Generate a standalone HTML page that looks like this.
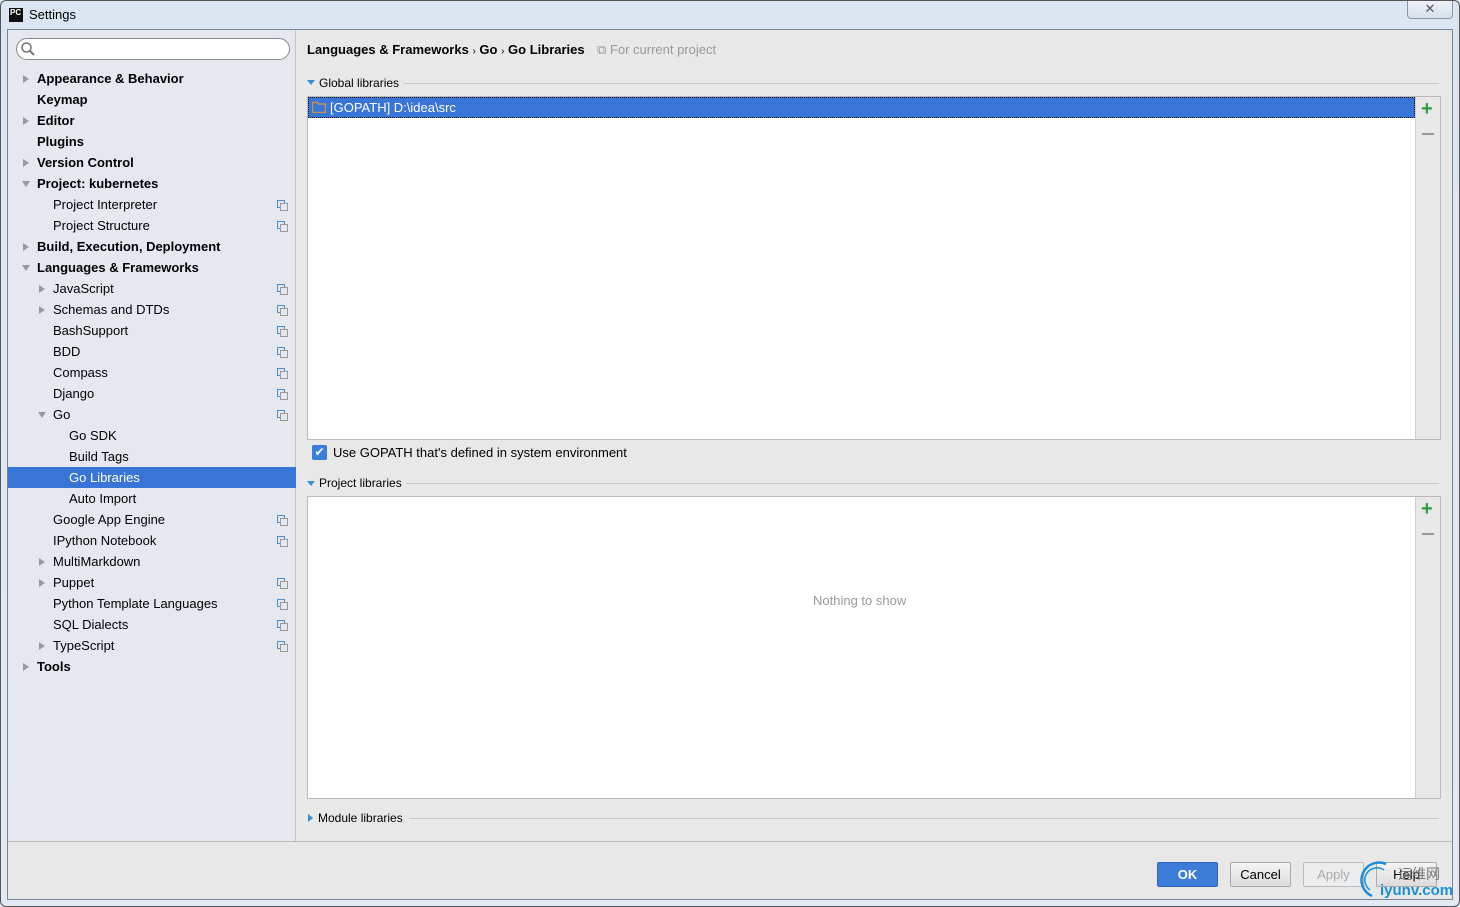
<!DOCTYPE html>
<html><head><meta charset="utf-8"><style>
*{margin:0;padding:0;box-sizing:border-box}
body{width:1460px;height:907px;overflow:hidden;background:#dfe7f0;font-family:"Liberation Sans","DejaVu Sans",sans-serif;font-size:13px;color:#000;position:relative}
.a{position:absolute}
.win{left:0;top:0;width:1460px;height:907px;border:1px solid #555;border-radius:6px;background:linear-gradient(#dce6f2,#e3eaf3)}
.dlg{left:7px;top:29px;width:1446px;height:871px;border:1px solid #7a8594;background:#e8e8e8}
.left{left:8px;top:30px;width:288px;height:811px;background:#e5e9ef;border-right:1px solid #c4c4c4}
.row{position:absolute;left:0;width:288px;height:21px;line-height:21px;white-space:nowrap}
.b{font-weight:bold}
.tri{position:absolute;top:7px;width:0;height:0;border-top:4px solid transparent;border-bottom:4px solid transparent;border-left:6px solid #999}
.trd{position:absolute;top:8px;width:0;height:0;border-left:4px solid transparent;border-right:4px solid transparent;border-top:6px solid #999}
.ic{position:absolute;left:269px;top:6px;width:9px;height:9px}
.ic:before{content:"";position:absolute;left:0;top:0;width:6px;height:6px;border:1px solid #4a8fc9}
.ic:after{content:"";position:absolute;left:3px;top:3px;width:6px;height:6px;border:1px solid #999;background:#e5e9ef}
.sel{background:#3875d7;color:#fff}
.btn{position:absolute;top:862px;height:25px;border:1px solid #aaa;border-radius:2px;background:linear-gradient(#f4f4f4,#dcdcdc);text-align:center;line-height:23px;font-size:13px}
.hdr{font-size:12px}
.line{position:absolute;height:1px;background:#c8c8c8}
</style></head><body>
<div class="a win"></div>
<div class="a" style="left:9px;top:8px;width:14px;height:14px;background:#111;color:#fff;font-size:8px;font-weight:bold;line-height:10px;padding-left:1px">PC</div>
<div class="a" style="left:29px;top:7px;font-size:13px">Settings</div>
<div class="a" style="left:1407px;top:1px;width:46px;height:18px;border:1px solid #8a97a8;border-top:none;border-radius:0 0 4px 4px;background:linear-gradient(#eef2f7,#d6dfea);text-align:center;line-height:16px;color:#555;font-size:13px;font-weight:bold">✕</div>
<div class="a dlg"></div>
<div class="a left"></div>
<div class="a" style="left:16px;top:38px;width:274px;height:22px;border:1px solid #888;border-radius:11px;background:#fff"></div>
<svg class="a" style="left:20px;top:41px" width="16" height="16"><circle cx="6.5" cy="6.5" r="4.5" fill="none" stroke="#777" stroke-width="1.6"/><line x1="10" y1="10" x2="14" y2="14" stroke="#777" stroke-width="2"/></svg>

<div class="a" style="left:8px;top:68px">
<div class="row b" style="top:0"><i class="tri" style="left:15px"></i><span style="margin-left:29px">Appearance &amp; Behavior</span></div>
<div class="row b" style="top:21px"><span style="margin-left:29px">Keymap</span></div>
<div class="row b" style="top:42px"><i class="tri" style="left:15px"></i><span style="margin-left:29px">Editor</span></div>
<div class="row b" style="top:63px"><span style="margin-left:29px">Plugins</span></div>
<div class="row b" style="top:84px"><i class="tri" style="left:15px"></i><span style="margin-left:29px">Version Control</span></div>
<div class="row b" style="top:105px"><i class="trd" style="left:14px"></i><span style="margin-left:29px">Project: kubernetes</span></div>
<div class="row" style="top:126px"><span style="margin-left:45px">Project Interpreter</span><i class="ic"></i></div>
<div class="row" style="top:147px"><span style="margin-left:45px">Project Structure</span><i class="ic"></i></div>
<div class="row b" style="top:168px"><i class="tri" style="left:15px"></i><span style="margin-left:29px">Build, Execution, Deployment</span></div>
<div class="row b" style="top:189px"><i class="trd" style="left:14px"></i><span style="margin-left:29px">Languages &amp; Frameworks</span></div>
<div class="row" style="top:210px"><i class="tri" style="left:31px"></i><span style="margin-left:45px">JavaScript</span><i class="ic"></i></div>
<div class="row" style="top:231px"><i class="tri" style="left:31px"></i><span style="margin-left:45px">Schemas and DTDs</span><i class="ic"></i></div>
<div class="row" style="top:252px"><span style="margin-left:45px">BashSupport</span><i class="ic"></i></div>
<div class="row" style="top:273px"><span style="margin-left:45px">BDD</span><i class="ic"></i></div>
<div class="row" style="top:294px"><span style="margin-left:45px">Compass</span><i class="ic"></i></div>
<div class="row" style="top:315px"><span style="margin-left:45px">Django</span><i class="ic"></i></div>
<div class="row" style="top:336px"><i class="trd" style="left:30px"></i><span style="margin-left:45px">Go</span><i class="ic"></i></div>
<div class="row" style="top:357px"><span style="margin-left:61px">Go SDK</span></div>
<div class="row" style="top:378px"><span style="margin-left:61px">Build Tags</span></div>
<div class="row sel" style="top:399px"><span style="margin-left:61px">Go Libraries</span></div>
<div class="row" style="top:420px"><span style="margin-left:61px">Auto Import</span></div>
<div class="row" style="top:441px"><span style="margin-left:45px">Google App Engine</span><i class="ic"></i></div>
<div class="row" style="top:462px"><span style="margin-left:45px">IPython Notebook</span><i class="ic"></i></div>
<div class="row" style="top:483px"><i class="tri" style="left:31px"></i><span style="margin-left:45px">MultiMarkdown</span></div>
<div class="row" style="top:504px"><i class="tri" style="left:31px"></i><span style="margin-left:45px">Puppet</span><i class="ic"></i></div>
<div class="row" style="top:525px"><span style="margin-left:45px">Python Template Languages</span><i class="ic"></i></div>
<div class="row" style="top:546px"><span style="margin-left:45px">SQL Dialects</span><i class="ic"></i></div>
<div class="row" style="top:567px"><i class="tri" style="left:31px"></i><span style="margin-left:45px">TypeScript</span><i class="ic"></i></div>
<div class="row b" style="top:588px"><i class="tri" style="left:15px"></i><span style="margin-left:29px">Tools</span></div>
</div>

<div class="a b" style="left:307px;top:42px">Languages &amp; Frameworks <span style="font-weight:normal;font-size:10px">›</span> Go <span style="font-weight:normal;font-size:10px">›</span> Go Libraries</div>
<div class="a" style="left:597px;top:42px;color:#999">⧉ For current project</div>

<div class="a" style="left:307px;top:80px;width:0;height:0;border-left:4px solid transparent;border-right:4px solid transparent;border-top:5px solid #3a8fd0"></div>
<div class="a hdr" style="left:319px;top:76px">Global libraries</div>
<div class="line" style="left:403px;top:83px;width:1036px"></div>
<div class="a" style="left:307px;top:96px;width:1134px;height:344px;border:1px solid #bbb;background:#fff"></div>
<div class="a" style="left:1415px;top:97px;width:25px;height:342px;background:#e8e8e8;border-left:1px solid #ccc"></div>
<div class="a" style="left:308px;top:97px;width:1107px;height:21px;background:#3875d7;border:1px dotted #111"></div>
<svg class="a" style="left:312px;top:101px" width="14" height="12"><path d="M0.5 1.5h5l1 1.5h7v8.5h-13z" fill="none" stroke="#c8954a" stroke-width="1.5"/></svg>
<div class="a" style="left:330px;top:100px;color:#fff">[GOPATH] D:\idea\src</div>
<div class="a" style="left:1421px;top:98px;color:#2a9d3e;font-size:20px;font-weight:bold">+</div>
<div class="a" style="left:1422px;top:133px;width:12px;height:2px;background:#999"></div>

<div class="a" style="left:312px;top:445px;width:15px;height:15px;background:#3b7dd8;border-radius:2px;color:#fff;font-size:12px;line-height:15px;text-align:center">✔</div>
<div class="a" style="left:333px;top:445px">Use GOPATH that's defined in system environment</div>

<div class="a" style="left:307px;top:481px;width:0;height:0;border-left:4px solid transparent;border-right:4px solid transparent;border-top:5px solid #3a8fd0"></div>
<div class="a hdr" style="left:319px;top:476px">Project libraries</div>
<div class="line" style="left:406px;top:483px;width:1033px"></div>
<div class="a" style="left:307px;top:496px;width:1134px;height:303px;border:1px solid #bbb;background:#fff"></div>
<div class="a" style="left:1415px;top:497px;width:25px;height:301px;background:#e8e8e8;border-left:1px solid #ccc"></div>
<div class="a" style="left:813px;top:593px;color:#999">Nothing to show</div>
<div class="a" style="left:1421px;top:498px;color:#2a9d3e;font-size:20px;font-weight:bold">+</div>
<div class="a" style="left:1422px;top:533px;width:12px;height:2px;background:#999"></div>

<div class="a" style="left:308px;top:814px;width:0;height:0;border-top:4px solid transparent;border-bottom:4px solid transparent;border-left:5px solid #3a8fd0"></div>
<div class="a hdr" style="left:318px;top:811px">Module libraries</div>
<div class="line" style="left:409px;top:818px;width:1030px"></div>

<div class="a" style="left:8px;top:841px;width:1444px;height:1px;background:#bbb"></div>
<div class="btn" style="left:1157px;width:61px;background:#3b7dd8;border-color:#3466b8;color:#fff;font-weight:bold">OK</div>
<div class="btn" style="left:1230px;width:61px">Cancel</div>
<div class="btn" style="left:1303px;width:61px;color:#aaa;background:#ececec;border-color:#bbb">Apply</div>
<div class="btn" style="left:1376px;width:61px">Help</div>
<div class="a" style="left:1398px;top:864px;color:#777;font-size:14px;font-family:'Noto Sans CJK SC',sans-serif">运维网</div>
<div class="a" style="left:1380px;top:882px;color:#1a8fd8;font-size:15px;font-weight:bold">iyunv.com</div>
<svg class="a" style="left:1356px;top:860px" width="40" height="40"><path d="M30 4 A17 17 0 1 0 16 36" fill="none" stroke="#1a8fd8" stroke-width="2.5"/><path d="M28 10 A11 11 0 1 0 14 30" fill="none" stroke="#1a8fd8" stroke-width="1.5"/></svg>
</body></html>
